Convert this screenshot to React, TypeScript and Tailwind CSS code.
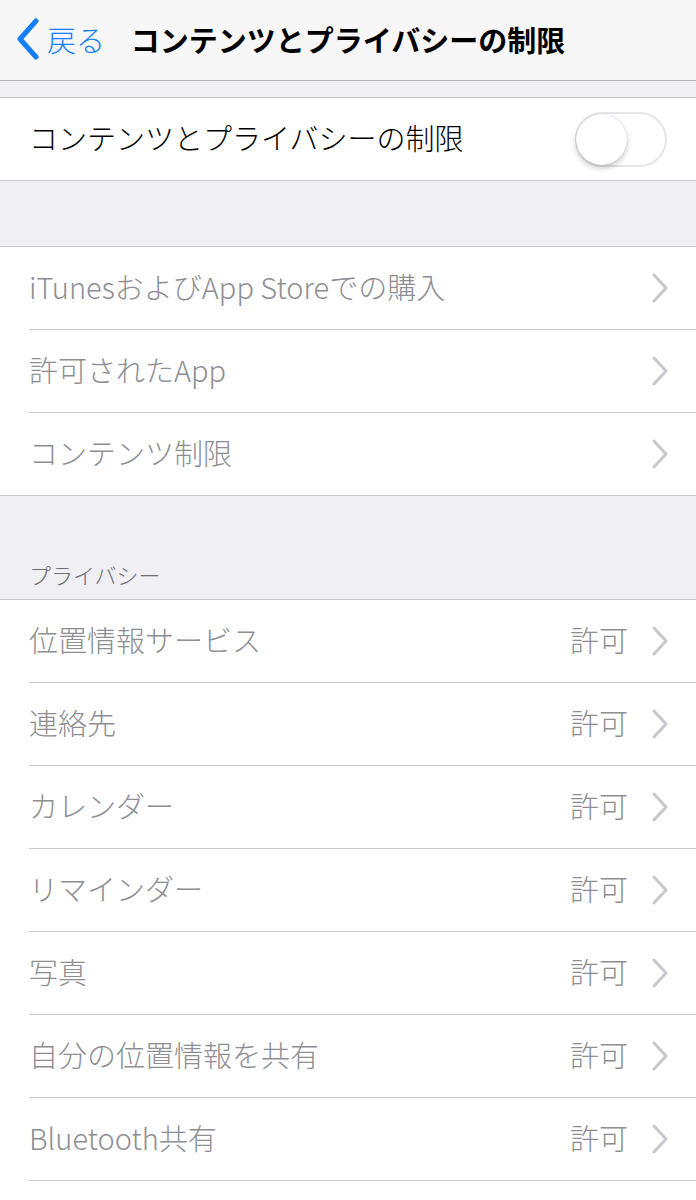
import React from "react";

const font = { fontFamily: '"Noto Sans CJK JP", "Noto Sans", sans-serif' };

function Chevron() {
  return (
    <svg width="16" height="30" viewBox="0 0 16 30" className="shrink-0">
      <path d="M2 2 L14 15 L2 28" fill="none" stroke="#c7c7cc" strokeWidth="3" strokeLinecap="round" strokeLinejoin="round" />
    </svg>
  );
}

function Row({ label, value, last }: { label: string; value?: string; last?: boolean }) {
  return (
    <div className="pl-[29px] bg-white">
      <div className={`flex items-center pr-[28px] ${last ? "h-[82px]" : "border-b border-[#c8c7cc] h-[83px]"}`}>
        <span className="flex-1 text-[29px] font-light text-[#8e8e93] leading-none -mt-[3px]">{label}</span>
        {value && <span className="text-[29px] font-light text-[#8e8e93] leading-none mr-[24px] -mt-[3px]">{value}</span>}
        <Chevron />
      </div>
    </div>
  );
}

export default function App() {
  const privacy = ["位置情報サービス", "連絡先", "カレンダー", "リマインダー", "写真", "自分の位置情報を共有", "Bluetooth共有"];
  return (
    <div className="w-[696px] h-[1200px] overflow-hidden bg-[#efeff4]" style={font}>
      <div className="relative h-[81px] bg-[#f7f7f7] border-b border-[#b4b4b8] flex items-center justify-center">
        <div className="absolute left-[14px] top-[18px] flex items-center">
          <svg width="28" height="42" viewBox="0 0 28 42">
            <path d="M22 3 L6 21 L22 39" fill="none" stroke="#157efb" strokeWidth="5" strokeLinecap="round" strokeLinejoin="round" />
          </svg>
          <span className="ml-[5px] text-[29px] font-light text-[#157efb] leading-none">戻る</span>
        </div>
        <span className="text-[29px] font-bold text-black leading-none -mt-[2px]">コンテンツとプライバシーの制限</span>
      </div>
      <div className="h-[16px]" />
      <div className="bg-white border-y border-[#c8c7cc] h-[84px] flex items-center pl-[29px] pr-[29px]">
        <span className="flex-1 text-[29px] font-light text-black leading-none -mt-[4px]">コンテンツとプライバシーの制限</span>
        <div className="w-[92px] h-[55px] rounded-full border-2 border-[#e5e5ea] bg-white relative">
          <div className="absolute left-[-1px] top-[0px] w-[51px] h-[51px] rounded-full bg-white shadow-[0_3px_6px_rgba(0,0,0,0.22),0_0_1px_rgba(0,0,0,0.2)]" />
        </div>
      </div>
      <div className="h-[65px]" />
      <div className="border-y border-[#c8c7cc]">
        <Row label="iTunesおよびApp Storeでの購入" />
        <Row label="許可されたApp" />
        <Row label="コンテンツ制限" last />
      </div>
      <div className="h-[103px] flex items-end pl-[29px] pb-[14px]">
        <span className="text-[22px] font-light text-[#6d6d72] leading-none">プライバシー</span>
      </div>
      <div className="border-t border-[#c8c7cc] bg-white">
        {privacy.map((p) => (
          <Row key={p} label={p} value="許可" />
        ))}
        <div className="h-[40px] bg-white" />
      </div>
    </div>
  );
}
